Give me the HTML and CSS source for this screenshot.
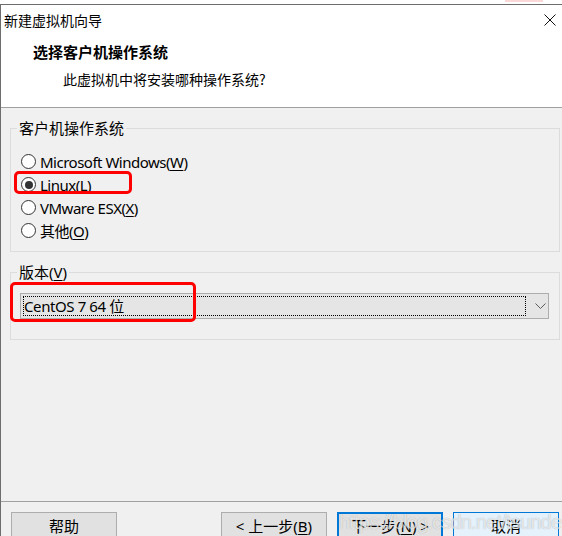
FILE: index.html
```html
<!DOCTYPE html>
<html lang="zh-CN">
<head>
<meta charset="utf-8">
<title>新建虚拟机向导</title>
<link rel="stylesheet" href="styles.css">
</head>
<body>
<div class="strip"><span class="strip-mark"></span></div>
<div class="window">
  <div class="titlebar">
    <span class="title">新建虚拟机向导</span>
    <svg class="close" width="12" height="12" viewBox="0 0 12 12"><path d="M0.5 0.5 L11.5 11.5 M11.5 0.5 L0.5 11.5" stroke="#111" stroke-width="1" fill="none"/></svg>
  </div>
  <div class="header">
    <div class="h-title">选择客户机操作系统</div>
    <div class="h-sub">此虚拟机中将安装哪种操作系统?</div>
  </div>
  <div class="body">
    <fieldset class="group g1">
      <legend>客户机操作系统</legend>
      <div class="radio"><span class="circle"></span><span class="lbl">Microsoft Windows(<u>W</u>)</span></div>
      <div class="radio marked"><span class="circle on"></span><span class="lbl">Linux(<u>L</u>)</span><span class="hl hl1"></span></div>
      <div class="radio"><span class="circle"></span><span class="lbl">VMware ESX(<u>X</u>)</span></div>
      <div class="radio"><span class="circle"></span><span class="lbl">其他(<u>O</u>)</span></div>
    </fieldset>
    <fieldset class="group g2">
      <legend>版本(<u>V</u>)</legend>
      <div class="select">
        <div class="focus">CentOS 7 64 位</div>
        <svg class="chev" width="11" height="6" viewBox="0 0 11 6"><polyline points="0.5,0.5 5.5,5.5 10.5,0.5" stroke="#5a5a5a" stroke-width="1" fill="none"/></svg>
        <span class="hl hl2"></span>
      </div>
    </fieldset>
  </div>
  <div class="footer">
    <button class="btn help">帮助</button>
    <span class="spacer"></span>
    <button class="btn">&lt; 上一步(<u>B</u>)</button>
    <button class="btn default">下一步(<u>N</u>) &gt;</button>
    <button class="btn cancel">取消</button>
    <span class="watermark">https://blog.csdn.net/tsundere_x</span>
  </div>
</div>
</body>
</html>
```
FILE: styles.css
```css
* { box-sizing: border-box; }
html, body { margin: 0; padding: 0; }
body {
  width: 562px;
  height: 536px;
  overflow: hidden;
  background: #f0f0f0;
  font-family: "Noto Sans", "Noto Sans CJK SC", sans-serif;
  font-size: 15px;
  color: #000;
}
u { text-decoration: underline; text-underline-offset: 2px; }

.strip { height: 4px; background: #fff; display: flex; }
.strip-mark { width: 38px; height: 2px; background: #fbd9d9; margin-left: 505px; }

.window {
  height: 532px;
  border-top: 1px solid #6d6d6d;
  border-left: 1px solid #6d6d6d;
  display: flex;
  flex-direction: column;
  position: relative;
}

.titlebar {
  height: 30px;
  background: #fff;
  display: flex;
  align-items: center;
  justify-content: space-between;
  padding: 0 6px 0 3px;
}
.title { font-size: 14px; line-height: 20px; font-family: "Noto Sans CJK SC", sans-serif; }
.close { display: block; margin-top: -1px; }

.header {
  background: #fff;
  height: 73px;
  border-bottom: 1px solid #a0a0a0;
  padding: 7px 0 0 32px;
}
.h-title { font-weight: bold; font-size: 15px; line-height: 20px; font-family: "Noto Sans CJK SC", sans-serif; }
.h-sub { font-size: 14px; line-height: 20px; margin-top: 7px; padding-left: 30px; font-family: "Noto Sans CJK SC", sans-serif; }

.body { flex: 1; display: flex; flex-direction: column; }

.group {
  margin: 10px 2px 0 9px;
  border: 1px solid #dcdcdc;
  padding: 0 10px 0 9px;
  min-width: 0;
}
.group legend {
  padding: 0 2px;
  margin-left: -3px;
  line-height: 20px;
  font-size: 15px;
}
.g1 { padding-top: 12px; padding-bottom: 9px; }
.g2 { padding-top: 11px; padding-bottom: 20px; }

.radio {
  position: relative;
  height: 23px;
  display: flex;
  align-items: center;
  margin-left: 1px;
  line-height: 20px;
}
.lbl { letter-spacing: -0.5px; }
.circle {
  width: 15px;
  height: 15px;
  border: 1px solid #333;
  border-radius: 50%;
  background: #fff;
  margin-right: 4px;
  display: flex;
  align-items: center;
  justify-content: center;
  flex: none;
}
.circle.on::after {
  content: "";
  width: 8px;
  height: 8px;
  border-radius: 50%;
  background: #333;
}

.hl {
  position: absolute;
  border: 3px solid #ff0000;
  border-radius: 5px;
  pointer-events: none;
}
.hl1 { left: -7px; top: -2px; width: 118px; height: 23px; }
.hl2 { left: -11px; top: -12px; width: 186px; height: 40px; }

.select {
  position: relative;
  height: 26px;
  background: #e5e5e5;
  border: 1px solid #adadad;
  display: flex;
  align-items: center;
  padding: 2px;
}
.focus {
  width: 504px;
  height: 20px;
  border: 1px dotted #000;
  line-height: 18px;
  font-size: 15px;
  letter-spacing: -0.4px;
}
.chev { margin-left: 9px; display: block; }

.footer {
  position: relative;
  margin-top: auto;
  height: 35px;
  border-top: 1px solid #a0a0a0;
  display: flex;
  align-items: flex-start;
  padding: 10px 3px 0 10px;
  gap: 10px;
  overflow: hidden;
}
.spacer { flex: 1; }
.btn {
  width: 106px;
  height: 26px;
  background: #e1e1e1;
  border: 1px solid #adadad;
  font-family: "Noto Sans", "Noto Sans CJK SC", sans-serif;
  font-size: 15px;
  line-height: 20px;
  padding: 2px 0 0;
  color: #000;
  flex: none;
}
.btn.default { border: 2px solid #0078d7; padding-top: 1px; }
.btn.cancel { border-color: #0078d7; background: #e5f1fb; }
.watermark {
  position: absolute;
  left: 338px;
  top: 9px;
  font-family: "Liberation Sans", sans-serif;
  font-size: 20px;
  letter-spacing: -0.8px;
  color: rgba(255, 255, 255, 0.7);
  text-shadow: 0 0 1px rgba(0, 0, 0, 0.3);
  white-space: nowrap;
  pointer-events: none;
}
```
